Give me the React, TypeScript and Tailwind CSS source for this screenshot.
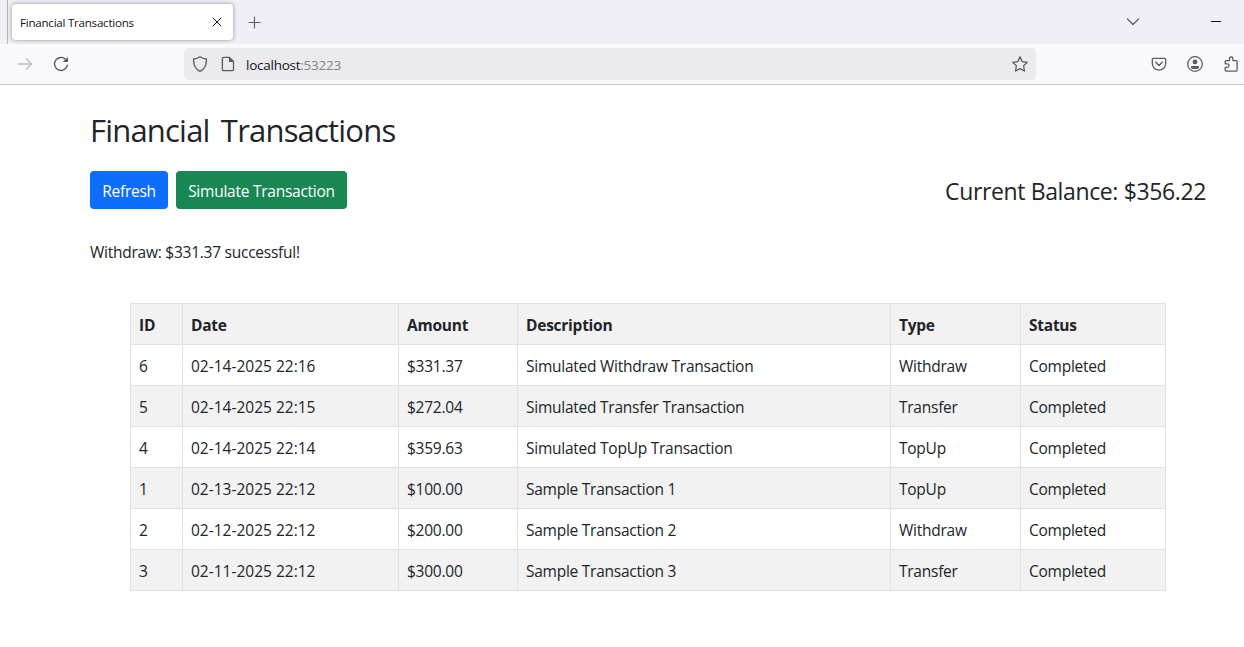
import type { ReactNode } from "react";

const columns = ["ID", "Date", "Amount", "Description", "Type", "Status"];

const rows = [
  ["6", "02-14-2025 22:16", "$331.37", "Simulated Withdraw Transaction", "Withdraw", "Completed"],
  ["5", "02-14-2025 22:15", "$272.04", "Simulated Transfer Transaction", "Transfer", "Completed"],
  ["4", "02-14-2025 22:14", "$359.63", "Simulated TopUp Transaction", "TopUp", "Completed"],
  ["1", "02-13-2025 22:12", "$100.00", "Sample Transaction 1", "TopUp", "Completed"],
  ["2", "02-12-2025 22:12", "$200.00", "Sample Transaction 2", "Withdraw", "Completed"],
  ["3", "02-11-2025 22:12", "$300.00", "Sample Transaction 3", "Transfer", "Completed"],
];

function Icon({ children, className = "" }: { children: ReactNode; className?: string }) {
  return (
    <svg
      viewBox="0 0 16 16"
      className={`size-4 shrink-0 fill-none stroke-[#5b5b66] ${className}`}
      strokeWidth="1.3"
      strokeLinecap="round"
      strokeLinejoin="round"
    >
      {children}
    </svg>
  );
}

function TabStrip() {
  return (
    <div className="flex h-11 bg-[#f0eff5]">
      <div className="ml-[7px] h-11 w-px shrink-0 bg-[#b4b4ba]" />
      <div className="mt-1 ml-1 flex h-9 w-[221px] shrink-0 items-center justify-between rounded bg-white pr-2 pl-2 shadow-[0_0_4px_rgba(0,0,0,0.4)]">
        <span className="pt-0.5 text-[11.6px] tracking-[-0.25px] text-[#15141a]">Financial Transactions</span>
        <Icon className="stroke-[#15141a]!">
          <path d="M4 4l8 8M12 4l-8 8" strokeWidth="1" />
        </Icon>
      </div>
      <div className="mt-[15px] ml-[14px]">
        <Icon>
          <path d="M7.5 2v11M2 7.5h11" strokeWidth="1.1" />
        </Icon>
      </div>
      <div className="mt-[13px] mr-[70px] ml-auto flex">
        <Icon>
          <path d="M2.5 6l5.5 5.5L13.5 6" strokeWidth="1.2" />
        </Icon>
      </div>
      <div className="mt-[21px] mr-[23px] h-px w-2.5 bg-[#15141a]" />
    </div>
  );
}

function Toolbar() {
  return (
    <div className="flex h-[41px] items-center border-b border-[#cccccf] bg-[#f9f9fb]">
      <Icon className="ml-[17px] stroke-[#bcbcc1]!">
        <path d="M1.2 8h13.3M9.2 2.8L14.5 8l-5.3 5.2" />
      </Icon>
      <Icon className="ml-5">
        <path d="M14.4 9.2A6.5 6.5 0 1 1 12.8 3.5" strokeWidth="1.4" />
        <path d="M15 .9v5.2H9.8z" className="fill-[#5b5b66] stroke-none" />
      </Icon>
      <div className="ml-[115px] flex h-8 w-[852px] items-center rounded bg-[#ebebed] pr-2 pl-2">
        <Icon>
          <path d="M8 .8c2 1.5 4.1 2 6.4 2.2.3 5.5-1.2 9.7-6.4 12.3C2.8 12.7 1.3 8.5 1.6 3 3.9 2.8 6 2.3 8 .8z" />
        </Icon>
        <Icon className="ml-3">
          <path d="M3.6 1.4h5.9l4 4v8a1.2 1.2 0 0 1-1.2 1.2H3.6a1.2 1.2 0 0 1-1.2-1.2V2.6a1.2 1.2 0 0 1 1.2-1.2z" />
          <path d="M8.9 1v5h5z" className="fill-[#5b5b66] stroke-none" />
        </Icon>
        <span className="ml-2.5 pt-0.5 text-[13.5px] tracking-[-0.25px] text-[#15141a]">
          localhost<span className="text-[#84848a]">:53223</span>
        </span>
        <Icon className="ml-auto">
          <path d="M8 .9l2.2 4.7 5.1.7-3.7 3.6.9 5.1L8 12.6 3.5 15l.9-5.1L.7 6.3l5.1-.7z" />
        </Icon>
      </div>
      <Icon className="ml-[115px]">
        <path d="M2.5 2.3h11a1.2 1.2 0 0 1 1.2 1.2V7.5a6.7 6.7 0 0 1-13.4 0V3.5a1.2 1.2 0 0 1 1.2-1.2z" />
        <path d="M4.7 6.3L8 9.5l3.3-3.2" strokeWidth="1.4" />
      </Icon>
      <Icon className="ml-5">
        <circle cx="8" cy="8" r="7.3" />
        <circle cx="8" cy="5.9" r="2.4" className="fill-[#5b5b66] stroke-none" />
        <path d="M4 9.9h8v1.3a2 2 0 0 1-2 1.7H6a2 2 0 0 1-2-1.7z" className="fill-[#5b5b66] stroke-none" />
      </Icon>
      <Icon className="ml-5">
        <path d="M2.2 7.8V5.6a1 1 0 0 1 1-1h3.3V2.7a1.7 1.7 0 0 1 3.4 0v1.9h3.2a1 1 0 0 1 1 1v8.5a1 1 0 0 1-1 1H3.2a1 1 0 0 1-1-1v-2.7h2.1a1.7 1.7 0 0 0 0-3.6z" />
      </Icon>
    </div>
  );
}

function TransactionTable() {
  return (
    <table className="mt-[39px] ml-10 w-[1036px] table-fixed border-separate border-spacing-0 border-t border-l border-[#dee2e6] text-left">
      <colgroup>
        <col className="w-[52px]" />
        <col className="w-[216px]" />
        <col className="w-[119px]" />
        <col className="w-[373px]" />
        <col className="w-[130px]" />
        <col className="w-[145px]" />
      </colgroup>
      <thead>
        <tr className="h-[41px] bg-[#f2f2f2]">
          {columns.map((name) => (
            <th key={name} className="border-r border-b border-[#dee2e6] px-2 pt-2 pb-1.5 leading-6 font-bold">
              {name}
            </th>
          ))}
        </tr>
      </thead>
      <tbody>
        {rows.map((row) => (
          <tr key={row[0]} className="h-[41px] even:bg-[#f2f2f2]">
            {row.map((value, i) => (
              <td
                key={columns[i]}
                className="border-r border-b border-[#dee2e6] px-2 pt-2 pb-1.5 leading-6 nth-2:tracking-[0px]"
              >
                {value}
              </td>
            ))}
          </tr>
        ))}
      </tbody>
    </table>
  );
}

export default function App() {
  return (
    <div className="h-[647px] w-[1244px] overflow-hidden bg-white font-['Open_Sans','Noto_Sans',sans-serif] text-[15.5px] tracking-[-0.25px] text-[#212529]">
      <TabStrip />
      <Toolbar />
      <main className="pt-[26px] pr-[38px] pl-[90px]">
        <h2 className="text-[31px] leading-[38px] tracking-[-0.8px] [word-spacing:4px]">Financial Transactions</h2>
        <div className="mt-[22px] flex h-[38px] items-center gap-2 text-white">
          <button className="h-[38px] w-[78px] rounded bg-[#0d6efd] pt-1">Refresh</button>
          <button className="h-[38px] w-[171px] rounded bg-[#198754] pt-1">Simulate Transaction</button>
          <span className="ml-auto pt-0.5 text-[23px] tracking-[-0.37px] text-[#212529]">Current Balance: $356.22</span>
        </div>
        <p className="mt-[31px] h-6 leading-6">Withdraw: $331.37 successful!</p>
        <TransactionTable />
      </main>
    </div>
  );
}
